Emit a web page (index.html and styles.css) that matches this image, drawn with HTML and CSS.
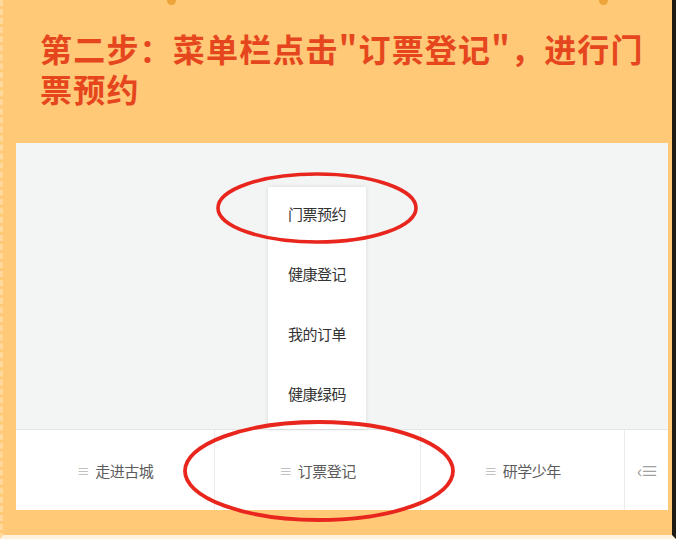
FILE: index.html
```html
<!DOCTYPE html>
<html lang="zh">
<head>
<meta charset="utf-8">
<link rel="stylesheet" href="styles.css">
</head>
<body>
<div class="page">
  <span class="dot dot-a"></span>
  <span class="dot dot-b"></span>
  <h1 class="title">第二步：菜单栏点击"订票登记"，进行门票预约</h1>
  <div class="panel">
    <div class="stage">
      <ul class="menu">
        <li>门票预约</li>
        <li>健康登记</li>
        <li>我的订单</li>
        <li>健康绿码</li>
      </ul>
      <svg class="ring ring-top" width="204" height="74" viewBox="0 0 204 74"><ellipse cx="102" cy="37" rx="99" ry="34" fill="none" stroke="#e8261d" stroke-width="3.6"/></svg>
    </div>
    <nav class="tabs">
      <div class="tab"><span class="ico">≡</span>走进古城</div>
      <div class="tab"><span class="ico">≡</span>订票登记</div>
      <div class="tab"><span class="ico">≡</span>研学少年</div>
      <div class="tab tab-cut"><span class="ico-more">‹≡</span></div>
    </nav>
    <svg class="ring ring-bottom" width="274" height="104" viewBox="0 0 274 104"><ellipse cx="137" cy="52" rx="134" ry="49" fill="none" stroke="#e8261d" stroke-width="3.8"/></svg>
  </div>
</div>
</body>
</html>
```
FILE: styles.css
```css
html, body {
  margin: 0;
  padding: 0;
}
body {
  width: 676px;
  height: 539px;
  overflow: hidden;
  background: #ffc977;
  font-family: "Noto Sans CJK SC", "Noto Sans", sans-serif;
}
.page {
  position: relative;
  width: 676px;
  height: 539px;
  box-sizing: border-box;
  padding: 28px 0 0 13px;
  border-left: 3px dashed #ffd99c;
  border-right: 4px solid #1e1a14;
  border-bottom: 4px solid #fff1dc;
}
.dot {
  position: absolute;
  top: -4px;
  width: 9px;
  height: 9px;
  border-radius: 50%;
  background: #f0a43c;
}
.dot-a { left: 164px; }
.dot-b { left: 596px; }
.title {
  margin: 0 0 35px 24px;
  width: 610px;
  font-size: 32px;
  line-height: 40px;
  font-weight: 700;
  letter-spacing: 1.2px;
  color: #e6461e;
}
.panel {
  position: relative;
  width: 652px;
  height: 367px;
  background: #f3f4f4;
  display: flex;
  flex-direction: column;
}
.stage {
  position: relative;
  flex: 1;
}
.menu {
  position: absolute;
  left: 252px;
  top: 44px;
  bottom: 0;
  width: 98px;
  margin: 0;
  padding: 16px 0 0;
  list-style: none;
  background: #fff;
  box-shadow: 0 0 4px rgba(0, 0, 0, 0.12);
  display: flex;
  flex-direction: column;
  align-items: center;
  gap: 38px;
}
.menu li {
  font-size: 15px;
  line-height: 22px;
  color: #333;
  letter-spacing: -0.5px;
}
.ring {
  position: absolute;
  pointer-events: none;
}
.ring-top {
  left: 199px;
  top: 28px;
}
.ring-bottom {
  left: 166px;
  top: 276px;
}
.tabs {
  height: 80px;
  background: #fff;
  border-top: 1px solid #e6e6e6;
  display: grid;
  grid-template-columns: 199px 206px 204px 1fr;
}
.tab {
  display: flex;
  align-items: center;
  justify-content: center;
  font-size: 15px;
  color: #5c5c5c;
  letter-spacing: -0.5px;
  border-right: 1px solid #ebebeb;
}
.tab:last-child { border-right: none; }
.ico {
  color: #b5b5b5;
  font-size: 13px;
  margin-right: 6px;
}
.tab-cut {
  justify-content: flex-start;
  padding-left: 12px;
}
.ico-more {
  color: #a0a0a0;
  font-size: 18px;
  letter-spacing: -2px;
}
```
